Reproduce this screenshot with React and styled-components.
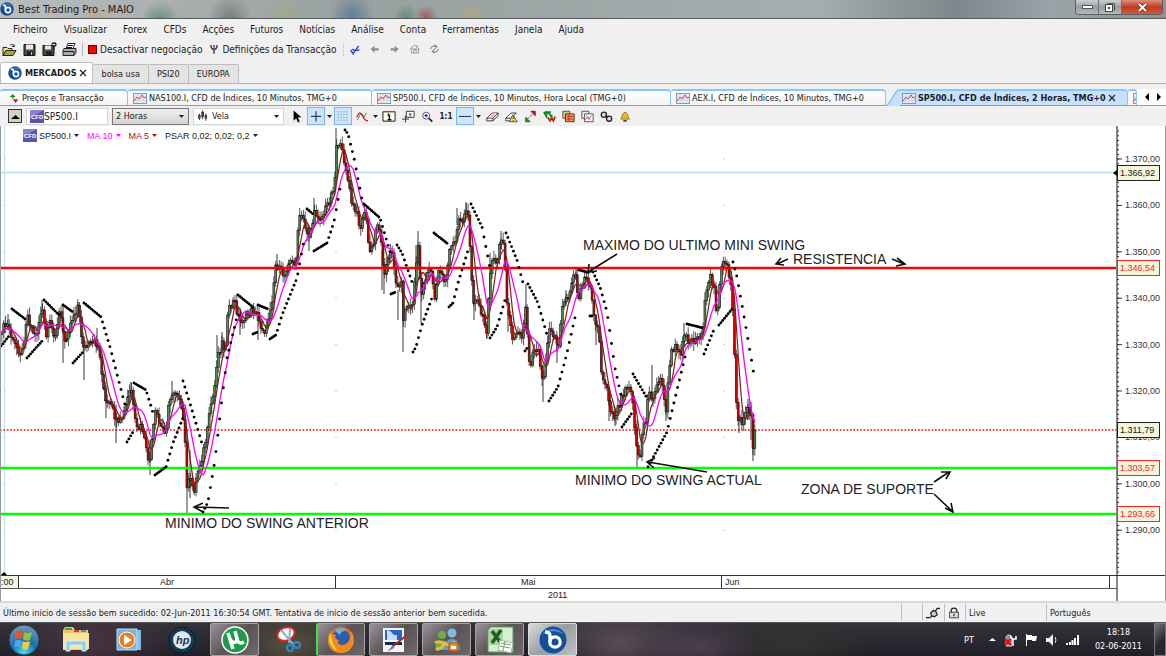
import React from 'react';
import styled, { createGlobalStyle, css } from 'styled-components';

const uiFont = '"DejaVu Sans Condensed", "Open Sans", sans-serif';
const chartFont = '"Liberation Sans", Arial, sans-serif';

const menus = ['Ficheiro', 'Visualizar', 'Forex', 'CFDs', 'Acções', 'Futuros', 'Notícias', 'Análise', 'Conta', 'Ferramentas', 'Janela', 'Ajuda'];
const workspaces = ['bolsa usa', 'PSI20', 'EUROPA'];
const charts = [
  { label: 'NAS100.I, CFD de Índices, 10 Minutos, TMG+0', width: 244 },
  { label: 'SP500.I, CFD de Índices, 10 Minutos, Hora Local (TMG+0)', width: 299 },
  { label: 'AEX.I, CFD de Índices, 10 Minutos, TMG+0', width: 215 },
];

// closing line of the session, x then y in chart units
const closes = [
  [0, 338], [2, 328], [8, 325], [13, 343], [22, 353], [27, 313], [32, 330], [36, 336], [42, 306], [46, 340], [49, 322], [54, 338],
  [60, 310], [64, 343], [68, 330], [74, 313], [78, 305], [81, 333], [84, 348], [90, 345], [95, 343], [98, 345], [102, 373], [105, 403],
  [110, 405], [115, 417], [118, 427], [124, 413], [128, 397], [131, 387], [134, 415], [136, 430], [142, 427], [147, 457], [150, 460],
  [153, 430], [156, 410], [160, 427], [166, 430], [169, 403], [173, 390], [178, 392], [180, 407], [184, 423], [187, 487], [190, 480],
  [194, 490], [198, 470], [203, 453], [207, 433], [211, 403], [214, 393], [217, 357], [222, 343], [225, 350], [228, 313], [234, 300],
  [240, 322], [245, 317], [255, 308], [260, 325], [266, 332], [269, 312], [272, 298], [276, 262], [280, 272], [285, 275], [289, 258],
  [295, 268], [298, 228], [301, 213], [305, 228], [309, 235], [315, 213], [322, 218], [327, 205], [332, 192], [335, 177], [337, 138],
  [340, 147], [345, 162], [348, 182], [352, 205], [357, 215], [361, 228], [365, 207], [369, 252], [373, 248], [378, 218], [382, 252],
  [384, 272], [388, 262], [392, 248], [397, 292], [401, 275], [403, 318], [407, 305], [412, 308], [416, 265], [418, 248], [421, 295],
  [425, 278], [430, 265], [435, 300], [439, 267], [445, 283], [450, 250], [455, 240], [458, 218], [463, 220], [467, 207], [470, 243],
  [473, 300], [478, 303], [483, 320], [487, 330], [489, 280], [493, 260], [497, 263], [500, 242], [504, 243], [506, 297], [509, 317],
  [513, 340], [518, 333], [522, 340], [526, 303], [528, 347], [530, 373], [533, 353], [538, 347], [543, 383], [546, 360], [548, 333],
  [553, 333], [558, 350], [563, 300], [568, 300], [572, 277], [576, 273], [578, 307], [582, 280], [590, 282], [595, 320], [599, 333],
  [601, 373], [607, 387], [610, 407], [614, 417], [618, 407], [625, 387], [630, 383], [633, 407], [637, 453], [640, 457], [643, 427],
  [646, 420], [648, 390], [653, 400], [660, 373], [666, 413], [668, 377], [672, 350], [676, 347], [680, 357], [684, 330], [688, 340],
  [695, 340], [702, 333], [705, 303], [710, 277], [714, 287], [717, 317], [720, 277], [722, 263], [727, 267], [729, 280], [732, 293],
  [734, 343], [737, 417], [742, 423], [747, 407], [751, 417], [753, 447], [755, 425],
];

// wicks that stand out: x, top, bottom
const spikes = [
  [8, 314, 330], [42, 300, 312], [63, 306, 363], [78, 302, 312], [84, 340, 380], [97, 328, 350], [106, 385, 418], [116, 405, 443], [131, 382, 400],
  [150, 440, 475], [172, 381, 400], [187, 430, 513], [190, 450, 498], [217, 335, 358], [222, 332, 350], [240, 310, 335], [258, 312, 340],
  [277, 254, 270], [309, 225, 251], [314, 198, 215], [336, 128, 178], [382, 250, 290], [384, 262, 294], [398, 290, 320], [403, 280, 352],
  [418, 231, 270], [421, 280, 323], [416, 245, 290], [457, 208, 225], [466, 202, 215], [474, 300, 320], [487, 325, 339], [490, 253, 290],
  [501, 231, 250], [508, 310, 332], [526, 284, 320], [543, 365, 402], [557, 345, 363], [566, 290, 306], [576, 269, 280], [596, 320, 345],
  [609, 390, 421], [615, 410, 426], [637, 420, 467], [652, 365, 400], [666, 400, 421], [684, 323, 340], [723, 261, 275], [739, 415, 433],
  [748, 399, 420], [751, 402, 440], [753, 430, 461],
];

const psar = [
  [[1, 346], [9, 336]],
  [[12, 309], [25, 319]],
  [[27, 358], [43, 340]],
  [[44, 300], [59, 315]],
  [[63, 305], [73, 312]],
  [[73, 363], [83, 352]],
  [[84, 303], [101, 317], [110, 347], [125, 405]],
  [[127, 442], [133, 432]],
  [[134, 383], [146, 390], [153, 413]],
  [[155, 475], [166, 467], [173, 443], [183, 418]],
  [[183, 381], [195, 420], [203, 447]],
  [[203, 512], [208, 502], [215, 460], [221, 407], [227, 358], [237, 317]],
  [[238, 295], [254, 308]],
  [[253, 334], [258, 332]],
  [[258, 305], [268, 309]],
  [[270, 339], [276, 335], [282, 315], [297, 278], [305, 235]],
  [[307, 209], [313, 214]],
  [[314, 251], [327, 243], [334, 222], [341, 183]],
  [[345, 130], [348, 134], [354, 158], [363, 205]],
  [[364, 204], [380, 218], [390, 252]],
  [[391, 294], [396, 292]],
  [[397, 245], [402, 253], [412, 282]],
  [[413, 352], [416, 347], [422, 325], [433, 295]],
  [[434, 233], [448, 244]],
  [[449, 307], [453, 303], [458, 283], [469, 247]],
  [[471, 204], [482, 227], [490, 268]],
  [[490, 338], [497, 327], [505, 300]],
  [[506, 233], [517, 260], [524, 287]],
  [[525, 351], [528, 347]],
  [[528, 284], [538, 303], [547, 335]],
  [[549, 401], [558, 387], [567, 353], [576, 313]],
  [[579, 270], [590, 273]],
  [[590, 316], [593, 316]],
  [[593, 272], [600, 287], [607, 312], [615, 368], [622, 400]],
  [[622, 427], [632, 413]],
  [[633, 374], [647, 398]],
  [[648, 467], [667, 432], [677, 390], [686, 353]],
  [[687, 324], [703, 328]],
  [[704, 354], [715, 327]],
  [[719, 325], [733, 308]],
  [[733, 262], [737, 277], [745, 322], [754, 375]],
];

const STEP = 1.85;

function sample(points, step) {
  const out = [];
  let i = 0;
  for (let x = points[0][0]; x <= points[points.length - 1][0]; x += step) {
    while (i < points.length - 2 && points[i + 1][0] < x) i += 1;
    const [x0, y0] = points[i];
    const [x1, y1] = points[i + 1];
    out.push([x, y0 + ((y1 - y0) * (x - x0)) / (x1 - x0)]);
  }
  return out;
}

const noise = (n) => {
  const v = Math.sin(n * 12.9898) * 43758.5453;
  return v - Math.floor(v);
};

const bars = sample(closes, STEP).map(([x, y], i) => [x, y + (noise(i) - 0.5) * 9]);

const candles = bars.slice(1).map(([x, y], i) => {
  const open = bars[i][1];
  const top = Math.min(open, y);
  const height = Math.max(Math.abs(open - y), 2);
  return {
    x,
    top,
    height,
    up: y < open,
    high: top - 1 - noise(i + 300) * 7,
    low: top + height + 1 + noise(i + 700) * 7,
  };
});

function average(size) {
  return bars
    .map(([x], i) => {
      const part = bars.slice(Math.max(0, i - size + 1), i + 1);
      return `${x.toFixed(1)},${(part.reduce((sum, p) => sum + p[1], 0) / part.length).toFixed(1)}`;
    })
    .join(' ');
}

const prices = ['1.370,00', '1.360,00', '1.350,00', '1.340,00', '1.330,00', '1.320,00', '1.310,00', '1.300,00', '1.290,00'];
const priceY = (i) => 159 + i * 46.4;
const ticks = Array.from({ length: 96 }, (_, i) => 131.2 + i * 4.64);

const tags = [
  { y: 173, text: '1.366,92', color: '#222' },
  { y: 268, text: '1.346,54', color: '#f22' },
  { y: 430, text: '1.311,79', color: '#222' },
  { y: 468, text: '1.303,57', color: '#f22' },
  { y: 514, text: '1.293,66', color: '#f22' },
];

const notes = [
  [583, 250, 'MAXIMO DO ULTIMO MINI SWING'],
  [793, 264, 'RESISTENCIA'],
  [575, 485, 'MINIMO DO SWING ACTUAL'],
  [801, 494, 'ZONA DE SUPORTE'],
  [165, 528, 'MINIMO DO SWING ANTERIOR'],
];

const arrows = [
  'M617 254 588 272M589 264 588 272 597 271',
  'M788 259 777 264M781 258 776 264 784 265',
  'M892 259 904 264M897 258 905 264 896 266',
  'M707 472 648 462M655 458 647 462 654 468',
  'M229 508 195 507M203 503 194 507 203 512',
  'M934 482 949 472M941 472 950 472 946 479',
  'M934 494 952 511M945 508 953 512 951 503',
];

function PriceChart() {
  return (
    <ChartSvg viewBox="0 126 1166 475" role="img" aria-label="SP500.I">
      <rect x="0" y="126" width="1166" height="475" fill="#fff" />
      <path d="M4.500 126V575" stroke="#c9e6f5" strokeWidth="1.500" />
      <path d="M0 172.500H1116" stroke="#b4dfe9" strokeWidth="1.300" />
      {prices.map((p, i) => (
        <path key={p} d={`M4 ${priceY(i)}h2M335 ${priceY(i)}h2M723 ${priceY(i)}h2`} stroke="#ccc" />
      ))}
      <path d="M0 430H1116" stroke="#e11" strokeWidth="1.500" strokeDasharray="1.700 1.700" />
      {spikes.map(([x, y1, y2]) => (
        <path key={x} d={`M${x} ${y1}V${y2}`} stroke="#222" strokeWidth="0.900" />
      ))}
      {candles.map((c) => (
        <g key={c.x} stroke="#111">
          <path d={`M${c.x} ${c.high}V${c.low}`} strokeWidth="0.700" />
          <rect x={c.x - 0.9} y={c.top} width="1.900" height={c.height} strokeWidth="0.600" fill={c.up ? '#4f8f55' : '#d40000'} />
        </g>
      ))}
      <path d="M0 268H1116" stroke="#f00" strokeWidth="2.600" />
      <path d="M0 468H1116M0 514H1116" stroke="#0f0" strokeWidth="2.600" />
      <polyline points={average(5)} fill="none" stroke="#8b1a1a" strokeWidth="1.200" />
      <polyline points={average(10)} fill="none" stroke="#f0f" strokeWidth="1.300" />
      {psar.map((track, t) =>
        sample(track, STEP).map(([x, y]) => <circle key={`${t}-${x}`} cx={x} cy={y} r="1.450" fill="#000" />)
      )}
      {arrows.map((d) => (
        <path key={d} d={d} fill="none" stroke="#111" strokeWidth="1.600" />
      ))}
      {notes.map(([x, y, text]) => (
        <text key={text} x={x} y={y} fontSize="14" fill="#222">{text}</text>
      ))}

      <path d="M1117 126V601" stroke="#555" strokeWidth="1.400" />
      {ticks.map((y) => (
        <path key={y} d={`M1117 ${y}h2`} stroke="#333" />
      ))}
      {prices.map((p, i) => (
        <g key={p}>
          <path d={`M1117 ${priceY(i)}h5`} stroke="#333" />
          <text x="1125" y={priceY(i) + 3} fontSize="9" fill="#333">{p}</text>
        </g>
      ))}
      {tags.map((t) => (
        <g key={t.text}>
          <rect x="1117.500" y={t.y - 7.5} width="42" height="15" fill="#f5f5dc" stroke={t.color} />
          <text x="1120" y={t.y + 3} fontSize="9" fill={t.color}>{t.text}</text>
        </g>
      ))}
      <path d="M1113 173l4-3v6z" fill="#000" />

      <path d="M0 575.500H1166" stroke="#333" />
      <path d="M0 588.500H1117" stroke="#555" />
      <rect x="0" y="576" width="18" height="12" fill="#f5f5dc" />
      <path d="M18.500 576V588M335.500 576V588M721.500 576V588M1109.500 576V588" stroke="#333" />
      <path d="M1 575l3-3 3 3z" fill="#000" />
      <g fontSize="9" fill="#222">
        <text x="1" y="585">:00</text>
        <text x="160" y="585">Abr</text>
        <text x="521" y="585">Mai</text>
        <text x="725" y="585">Jun</text>
        <text x="548" y="598">2011</text>
      </g>
      <path d="M.5 126V601M1165.500 126V601" stroke="#999" />
    </ChartSvg>
  );
}

/* icons */

const Caret = () => <svg width="7" height="5" viewBox="0 0 7 5"><path d="M1 1h5L3.500 4z" fill="currentColor" /></svg>;

const BrandIcon = ({ size = 14 }) => (
  <svg width={size} height={size} viewBox="0 0 28 28">
    <circle cx="14" cy="14" r="13.500" fill="#134f9c" />
    <path d="M3 9a13 13 0 0 1 22 0 18 18 0 0 0-22 0z" fill="#4d8fd6" />
    <path d="M6 6c4 0 5 1 5 4v6" fill="none" stroke="#fff" strokeWidth="3.500" />
    <circle cx="16" cy="16" r="5.200" fill="none" stroke="#fff" strokeWidth="3.200" />
  </svg>
);

const ChartIcon = () => (
  <svg width="14" height="11" viewBox="0 0 14 11">
    <rect x=".5" y=".5" width="13" height="10" fill="#e3ecf8" stroke="#8898b8" />
    <path d="M4 1v9M7 1v9M10 1v9M1 4h12M1 7h12" stroke="#c3d1e6" strokeWidth=".6" />
    <path d="M1 8l3-4 2 2 3-4 2 3 2-1" fill="none" stroke="#d44" />
  </svg>
);

const CfdIcon = () => (
  <svg width="14" height="13" viewBox="0 0 14 13">
    <rect width="14" height="13" fill="#5b53b4" />
    <path d="M0 0h14L0 8z" fill="#8a84d0" />
    <text x="1" y="9" fontSize="6" fontWeight="bold" fontFamily="Liberation Sans" fill="#fff">CFD</text>
  </svg>
);

const glyphs = {
  open: <><path d="M1 5h4l1 1h4v2H4l-3 5z" fill="#efe68a" stroke="#222" /><path d="M1 13l3-5h10l-3 5z" fill="#a9a53a" stroke="#222" /><path d="M8 3c2-2 4-1 4 1m-2 0h2V2" fill="none" stroke="#222" /></>,
  save: <><path d="M2 2h11v11H2z" fill="#4c5038" stroke="#111" /><path d="M4 2h7v5H4z" fill="#e8e8e8" /><path d="M5 9h6v4H5z" fill="#222" /><path d="M9 10h1v2H9z" fill="#fff" /></>,
  saveAs: <><path d="M1 3h11v10H1z" fill="#4c5038" stroke="#111" /><path d="M3 3h6v4H3z" fill="#e8e8e8" /><path d="M4 9h6v4H4z" fill="#222" /><path d="M10 2c0-2 4-2 4 0s-2 1-2 3m0 1v1" fill="none" stroke="#111" strokeWidth="1.300" /></>,
  print: <><path d="M4 6l2-5h7l-2 5" fill="#fff" stroke="#222" /><path d="M2 6h12v4l-2 3H1V8z" fill="#aaa" stroke="#222" /><path d="M1 9h11M6 3h5M5 5h5M12 9v4" stroke="#222" /></>,
  settings: <path d="M3 1v3l2 3h5l2-3V1M7.500 1v4M7.500 7v7" fill="none" stroke="#43254d" strokeWidth="2" />,
  check: <path d="M2 8l3 5 7-10M4 7l3 2M9 9l4-1" fill="none" stroke="#2338d8" strokeWidth="1.700" />,
  back: <path d="M2 7l5-4v3h5v3H7v3z" fill="#8d8d8d" />,
  next: <path d="M12 7L7 3v3H2v3h5v3z" fill="#8d8d8d" />,
  home: <path d="M1 7l6-5 6 5M3 6v6h9V6M6 12V8h3v4M4 7h7M10 2v3" fill="none" stroke="#888" />,
  refresh: <path d="M2 7c1-4 5-4 7-3M7 2l3 2-3 3M12 7c-1 4-5 4-7 3M7 12l-3-2 3-3" fill="none" stroke="#888" strokeWidth="1.300" />,
  pointer: <path d="M3 0v12l3-3 2 5 2-1-2-5h4z" fill="#000" />,
  cross: <path d="M7.500 2v11M2 7.500h11" stroke="#24425f" strokeWidth="1.300" />,
  grid: <path d="M2 2.500h11M2 5.500h11M2 8.500h11M2 11.500h11" stroke="#4d74a4" strokeDasharray="1 2" />,
  study: <><path d="M1 8c2-7 5-6 7-1s4 5 6 5" fill="none" stroke="#c22" strokeWidth="1.500" /><path d="M2 11c3-9 5-9 7-3l3-5" fill="none" stroke="#654" /></>,
  info: <><path d="M1 2.500h13v10H1z" fill="#fffce8" stroke="#111" /><path d="M6 6.500h2v4M6 11h4M7 4v1.500" stroke="#111" strokeWidth="1.500" fill="none" /></>,
  callout: <><path d="M5 1h9v7H5z" fill="#fff" stroke="#222" /><path d="M0 10h8M4 6v8M8 4h3M9.500 4v3" stroke="#222" /></>,
  zoom: <><circle cx="6" cy="6" r="4" fill="#fff" stroke="#444" /><path d="M4 6h4M6 4v4" stroke="#22f" strokeWidth="1.500" /><path d="M9 9l4 4" stroke="#222" strokeWidth="2" /></>,
  line: <path d="M1 7.500h13" stroke="#223" />,
  eraser: <><path d="M1 9l6-6h7L8 9zM1 9v3h7l6-6V3M8 9v3" fill="#fff" stroke="#222" /><path d="M3 9l5-6h4L7 9z" fill="#f4b8c4" /></>,
  warn: <><path d="M1 9l6-6h6l-6 6zM1 9v3h5" fill="#fff" stroke="#222" /><path d="M9 5l5 8H5z" fill="#ffe95a" stroke="#443" /><path d="M9.500 7v3M9.500 11v1" stroke="#111" /></>,
  trend: <><path d="M4 10l7-7" stroke="#222" strokeDasharray="1.500 1" /><path d="M8 1h5v5z" fill="#d22" stroke="#711" /><path d="M2 8v5h5z" fill="#2a2" stroke="#151" /></>,
  exchange: <><path d="M1 2l3 5V3h3l3 5V5M2 2h7" fill="none" stroke="#148a28" strokeWidth="2" /><path d="M6 8l2 4 2-3 2 3 2-5" fill="none" stroke="#b21" strokeWidth="2" /></>,
  stack: <><path d="M1 1h8v8H1z" fill="#d8c5a0" stroke="#444" /><path d="M4 4h10v9H4z" fill="#f0a040" stroke="#422" /><path d="M5 7h8M5 10h8M8 5v7" stroke="#b03020" /></>,
  stack2: <><path d="M1 1h8v8H1z" fill="#eee" stroke="#444" /><path d="M4 4h10v9H4z" fill="#fff" stroke="#444" /><path d="M5 11l2-3 2 2 3-4M6 6l5 5" fill="none" stroke="#c33" /></>,
  link: <><circle cx="4.500" cy="5" r="3" fill="#ddd" stroke="#222" strokeWidth="1.500" /><circle cx="10.500" cy="9.500" r="3" fill="#ddd" stroke="#222" strokeWidth="1.500" /><path d="M6 6l3 2" stroke="#222" strokeWidth="1.500" /></>,
  bell: <><path d="M2 10c2-1 1-7 5-8 4 1 3 7 5 8z" fill="#f3b325" stroke="#8f6510" /><path d="M5 12h4" stroke="#444" strokeWidth="2" /></>,
  plug: <path d="M0 12h4l3-2M10 5l2-3h3M5 7l3-3 3 2 1 3-3 2-3-1z" fill="#ccc" stroke="#222" strokeWidth="1.300" />,
  lock: <><path d="M4 7V4c0-4 7-4 7 0v3" fill="none" stroke="#222" strokeWidth="1.500" /><path d="M2 6h11v7H2z" fill="#ddd" stroke="#222" /><path d="M7.500 8v3" stroke="#222" strokeWidth="1.500" /></>,
  candles: <><path d="M3 4v8M7 0v11M11 4v9" stroke="#222" /><path d="M2 6h2v4H2zM10 6h2v4h-2z" fill="#5a9a5a" stroke="#222" /><path d="M6 2h2v6H6z" fill="#a22" stroke="#222" /></>,
  updown: <><path d="M5 1l4 4H1z" fill="#188a28" /><path d="M4 4h2v3H4z" fill="#188a28" /><path d="M9 13l4-5H5z" fill="#c22" /></>,
};

const Icon = ({ name, size = 13 }) => (
  <svg width={size} height={size} viewBox="0 0 15 14">{glyphs[name]}</svg>
);

const apps = [
  {
    name: 'Explorador',
    art: <><path d="M2 5l2-3h8l2 3h13v20H2z" fill="#e9c869" /><path d="M4 3h7v2H4z" fill="#3a3" /><path d="M13 5h5v2h-5z" fill="#d33" /><path d="M20 5h5v2h-5z" fill="#39c" /><path d="M2 8h26v16H2z" fill="#f8e5a0" /><path d="M5 26V16h20v10h-4v-6H9v6z" fill="#8fcdea" stroke="#d5effa" /></>,
  },
  {
    name: 'Media Player',
    art: <><path d="M6 5h21v20H10z" fill="#8bbbdc" /><path d="M3 4h20v21H3z" fill="#79b5dc" stroke="#bfe0f2" /><circle cx="13" cy="15" r="8" fill="#ef7b1a" stroke="#fff" /><path d="M10 10l8 5-8 5z" fill="#fff" /></>,
  },
  {
    name: 'HP',
    art: <><circle cx="15" cy="15" r="13" fill="#18384f" stroke="#0a2030" /><circle cx="15" cy="15" r="9" fill="#dfe8ee" /><text x="9" y="19" fontSize="11" fontStyle="italic" fontWeight="bold" fill="#18384f" fontFamily="Liberation Sans">hp</text></>,
  },
  {
    name: 'uTorrent',
    open: true,
    art: <><circle cx="15" cy="15" r="13" fill="#1f9a48" stroke="#fff" strokeWidth="1.500" /><path d="M8 8l5 16M10 14c2 5 7 4 7 0L15 6M17 14c1 4 3 5 7 3" fill="none" stroke="#fff" strokeWidth="3.500" /></>,
  },
  {
    name: 'Recorte',
    art: <><ellipse cx="13" cy="9" rx="9" ry="6.500" fill="#fff" stroke="#d22" strokeWidth="2" transform="rotate(-20 13 9)" /><path d="M8 5l12 14M17 4l-1 14" stroke="#9ab" strokeWidth="2" /><circle cx="17" cy="23" r="3" fill="none" stroke="#2b8ad0" strokeWidth="2" /><circle cx="24" cy="20" r="3" fill="none" stroke="#2b8ad0" strokeWidth="2" /></>,
  },
  {
    name: 'Firefox',
    open: true,
    lit: true,
    art: <><circle cx="15" cy="15" r="13" fill="#e4731b" /><circle cx="15" cy="13" r="9" fill="#2b5ea8" /><path d="M9 6c4-4 9-3 12 0-4-1-6 1-7 4z" fill="#69b0e4" /><path d="M4 7c1 3 4 2 6 3-2 2 0 5 3 5-2 2-1 5 3 5 5 0 8-4 8-9l1-5c6 9 2 22-10 22S-1 17 4 7z" fill="#f08a1c" /><path d="M4 8c-2 8 1 15 8 18-4-4-6-10-8-18z" fill="#ffd64a" /></>,
  },
  {
    name: 'Editor',
    open: true,
    art: <><path d="M4 3h21v24H4z" fill="#f4f6fa" /><path d="M6 5h17v10H6z" fill="#2e62c4" /><path d="M8 5c6 1 5 6 10 5v5H8z" fill="#c6dbf7" /><path d="M6 17h17v3H6z" fill="#14295c" /><path d="M28 10L13 22" stroke="#b4242c" strokeWidth="2" /><path d="M14 20l-6 7 7-4z" fill="#778" /></>,
  },
  {
    name: 'Messenger',
    open: true,
    art: <><circle cx="10" cy="10" r="4" fill="#6cb04c" /><path d="M3 25c0-13 14-13 14 0z" fill="#6cb04c" /><circle cx="20" cy="8" r="4.500" fill="#7db9e3" /><path d="M12 25c0-15 16-15 16 0z" fill="#5b9dd0" /><path d="M3 18c6-5 9 6 20-1M4 24c6 1 7-4 10-7" fill="none" stroke="#edb738" strokeWidth="3" /><path d="M17 18h9v8h-9z" fill="#f08a2c" stroke="#b8480c" /><path d="M19 21h5v3h-5z" fill="#fff" /></>,
  },
  {
    name: 'Excel',
    open: true,
    art: <><path d="M6 2h22v25H3V5z" fill="#d9efd4" stroke="#5a9a50" /><path d="M6 4h12v16H4V6z" fill="#a8d59a" /><path d="M7 6l9 12M16 5L7 18" stroke="#1d5c26" strokeWidth="3.500" /><path d="M15 15l13 3-2 10-13-3z" fill="#fff" stroke="#9b9" /><path d="M16 18l10 2M15 21l10 2M20 16l-2 10" stroke="#7b9c78" /></>,
  },
];

const chartTools = ['eraser', 'warn', 'trend', 'exchange', 'stack', 'stack2', 'link', 'bell'];

export default function App() {
  return (
    <Window>
      <GlobalStyle />
      <TitleBar>
        <BrandIcon size={14} />
        <Title>Best Trading Pro - MAIO</Title>
        <WindowButtons>
          <WindowButton aria-label="Minimizar"><svg width="11" height="4"><rect x=".5" y=".5" width="10" height="3" fill="#fff" stroke="#555" /></svg></WindowButton>
          <WindowButton aria-label="Restaurar"><svg width="12" height="11" fill="none"><path d="M3.500 1.500h7v7" stroke="#555" /><rect x="1.500" y="2.500" width="7" height="7" stroke="#444" fill="#fff" /><rect x="4" y="5" width="2" height="2" fill="#444" /></svg></WindowButton>
          <WindowButton $close aria-label="Fechar"><svg width="11" height="9"><path d="M2 1l7 7M9 1L2 8" stroke="#533" strokeWidth="3.500" /><path d="M2 1l7 7M9 1L2 8" stroke="#fff" strokeWidth="2" /></svg></WindowButton>
        </WindowButtons>
      </TitleBar>

      <MenuBar>
        {menus.map((m) => <MenuItem key={m}>{m}</MenuItem>)}
      </MenuBar>

      <MainToolbar>
        <ToolButton aria-label="Abrir"><Icon name="open" size={15} /></ToolButton>
        <ToolButton aria-label="Gravar"><Icon name="save" size={15} /></ToolButton>
        <ToolButton aria-label="Gravar como"><Icon name="saveAs" size={15} /></ToolButton>
        <ToolButton aria-label="Imprimir"><Icon name="print" size={15} /></ToolButton>
        <Divider />
        <TextButton><RedSquare />Desactivar negociação</TextButton>
        <TextButton><Icon name="settings" size={10} />Definições da Transacção</TextButton>
        <Divider $dotted />
        <SmallTools>
          {['check', 'back', 'next', 'home', 'refresh'].map((n) => (
            <ToolButton key={n} aria-label={n}><Icon name={n} size={12} /></ToolButton>
          ))}
        </SmallTools>
      </MainToolbar>

      <WorkspaceTabs>
        <WorkspaceTab $active><BrandIcon size={14} />MERCADOS <CloseX /></WorkspaceTab>
        {workspaces.map((w) => <WorkspaceTab key={w}>{w}</WorkspaceTab>)}
      </WorkspaceTabs>

      <DocTabs>
        <DocTab $first $width={128}><Icon name="updown" size={11} />Preços e Transacção</DocTab>
        {charts.map((c) => (
          <DocTab key={c.label} $width={c.width}><ChartIcon />{c.label}</DocTab>
        ))}
        <svg width="14" height="17" viewBox="0 0 14 17">
          <path d="M0 17C5 14 8 4 12 1h2v16z" fill="#c5e1ff" />
          <path d="M0 17C5 14 8 4 12 1h2" fill="none" stroke="#83c1fb" strokeWidth="1.500" />
        </svg>
        <DocTab $active $width={228}><ChartIcon />SP500.I, CFD de Índices, 2 Horas, TMG+0 <CloseX /></DocTab>
        <DocTab $width={9} aria-label="Seguinte"><ChartIcon /></DocTab>
        <Scroller>
          <ToolButton aria-label="Anterior"><svg width="6" height="8"><path d="M5 0v8L1 4z" /></svg></ToolButton>
          <ToolButton aria-label="Próximo"><svg width="6" height="8"><path d="M1 0v8l4-4z" /></svg></ToolButton>
        </Scroller>
      </DocTabs>

      <ChartToolbar>
        <CollapseButton aria-label="Recolher"><svg width="9" height="5"><path d="M0 5l4.500-4L9 5z" /></svg></CollapseButton>
        <Field $width={82}><CfdIcon /><SymbolInput aria-label="Símbolo" defaultValue="SP500.I" /></Field>
        <Field $width={77} $grey>
          <Select aria-label="Período" defaultValue="2 Horas"><option>2 Horas</option></Select>
          <Caret />
        </Field>
        <Field $width={91}>
          <Icon name="candles" size={12} />
          <Select aria-label="Tipo" defaultValue="Vela"><option>Vela</option></Select>
          <Caret />
        </Field>
        <Tools>
          <ChartTool aria-label="Ponteiro"><Icon name="pointer" /></ChartTool>
          <ChartTool $on aria-label="Cruz"><Icon name="cross" size={14} /></ChartTool>
          <ToolCaret aria-label="Opções da cruz"><Caret /></ToolCaret>
          <ChartTool $on aria-label="Grelha"><Icon name="grid" size={14} /></ChartTool>
          <ChartTool aria-label="Estudos"><Icon name="study" /></ChartTool>
          <ToolCaret aria-label="Opções de estudos"><Caret /></ToolCaret>
          <ChartTool aria-label="Informação"><Icon name="info" size={14} /></ChartTool>
          <ChartTool aria-label="Legenda"><Icon name="callout" /></ChartTool>
          <ChartTool aria-label="Zoom"><Icon name="zoom" /></ChartTool>
          <ChartTool>1:1</ChartTool>
          <ChartTool $on aria-label="Linha"><Icon name="line" size={14} /></ChartTool>
          <ToolCaret aria-label="Opções de linha"><Caret /></ToolCaret>
          {chartTools.map((n) => <ChartTool key={n} aria-label={n}><Icon name={n} /></ChartTool>)}
        </Tools>
      </ChartToolbar>

      <ChartPanel>
        <PriceChart />
        <Legend>
          <LegendItem $color="#222"><CfdIcon />SP500.I <Caret /></LegendItem>
          <LegendItem $color="#f0f">MA 10 <Caret /></LegendItem>
          <LegendItem $color="#a01818">MA 5 <Caret /></LegendItem>
          <LegendItem $color="#222">PSAR 0,02; 0,02; 0,2 <Caret /></LegendItem>
        </Legend>
      </ChartPanel>

      <StatusBar>
        <StatusText>Último início de sessão bem sucedido: 02-Jun-2011 16:30:54 GMT. Tentativa de início de sessão anterior bem sucedida.</StatusText>
        <StatusCell $width={21} />
        <StatusCell $width={22}><Icon name="plug" size={14} /></StatusCell>
        <StatusCell $width={21}><Icon name="lock" size={12} /></StatusCell>
        <StatusCell $width={81}>Live</StatusCell>
        <StatusCell $width={120}>Português</StatusCell>
      </StatusBar>

      <Taskbar>
        <StartButton aria-label="Iniciar">
          <svg width="34" height="32" viewBox="0 0 34 32">
            <defs>
              <radialGradient id="orb" cx="50%" cy="90%" r="90%">
                <stop offset="0" stopColor="#3fe0ff" />
                <stop offset=".45" stopColor="#1c6fae" />
                <stop offset="1" stopColor="#7d9ab0" />
              </radialGradient>
            </defs>
            <circle cx="17" cy="16" r="15" fill="url(#orb)" stroke="#1a3b55" />
            <path d="M9 8c3-2 5-1 7 0l-1 7c-2-1-5-1-7 1z" fill="#e8562a" />
            <path d="M17 8c3 2 5 1 8 0l-2 8c-3 1-5 1-7-1z" fill="#8cc63e" />
            <path d="M8 17c3-2 5-1 7 0l-1 7c-2-2-5-2-7 0z" fill="#49a8e8" />
            <path d="M16 17c2 2 4 1 7 0l-2 8c-2 1-4 1-6-1z" fill="#fcc938" />
          </svg>
        </StartButton>
        {apps.map((a) => (
          <TaskButton key={a.name} $open={a.open} $lit={a.lit} aria-label={a.name}>
            <svg width="30" height="30" viewBox="0 0 30 30">{a.art}</svg>
          </TaskButton>
        ))}
        <TaskButton $open $current aria-label="Best Trading Pro"><BrandIcon size={28} /></TaskButton>
        <Tray>
          <TrayText>PT</TrayText>
          <svg width="7" height="5"><path d="M0 4l3.500-3L7 4z" fill="#fff" /></svg>
          <svg width="13" height="14"><path d="M2 5c0-4 6-4 6 0v8H2z" fill="#888" stroke="#ddd" /><path d="M7 3v3h5V3M9 6v7" stroke="#fff" strokeWidth="1.500" fill="none" /><path d="M1 6l6 6M7 6l-6 6" stroke="#f00" strokeWidth="2" /></svg>
          <svg width="13" height="12"><path d="M1.500 0v12" stroke="#fff" /><path d="M2 1h5v1h5l-1 5H7V6H2z" fill="#fff" /></svg>
          <svg width="12" height="12"><path d="M0 4h3l4-4v12L3 8H0z" fill="#eee" /><path d="M9 3q2 3 0 6" stroke="#ddd" fill="none" /></svg>
          <svg width="13" height="10"><path d="M0 8h2v2H0zM3 7h2v3H3zM5.500 5h2v5h-2zM8 3h2v7H8zM11 0h2v10h-2z" fill="#fff" /></svg>
          <Clock><span>18:18</span><span>02-06-2011</span></Clock>
          <DesktopButton aria-label="Mostrar ambiente de trabalho" />
        </Tray>
      </Taskbar>
    </Window>
  );
}

const CloseX = () => <svg width="8" height="8"><path d="M1 1l6 6M7 1L1 7" stroke="#222" strokeWidth="1.200" /></svg>;

const GlobalStyle = createGlobalStyle`
  * { box-sizing: border-box; }

  body {
    margin: 0;
    background: #f0f0f0;
    font-family: ${uiFont};
    font-size: 9px;
    color: #1b1b1b;
  }

  button, input, select {
    margin: 0;
    padding: 0;
    border: 0;
    background: none;
    font: inherit;
    color: inherit;
    white-space: nowrap;
  }

  svg { flex: none; }
`;

const Window = styled.div`
  display: flex;
  flex-direction: column;
  min-height: 100vh;
`;

const TitleBar = styled.header`
  display: flex;
  align-items: center;
  gap: 4px;
  height: 19px;
  border-bottom: 1px solid #555d5f;
  background:
    radial-gradient(circle at 160px 22px, #3e7a5cb0, transparent 20px),
    radial-gradient(circle at 95px 22px, #c99a66a0, transparent 18px),
    radial-gradient(circle at 230px 18px, #5c6464a0, transparent 22px),
    radial-gradient(circle at 285px 18px, #a9a67ab0, transparent 20px),
    radial-gradient(circle at 352px 16px, #4a7096b0, transparent 22px),
    radial-gradient(circle at 406px 16px, #4f8a70c0, transparent 12px),
    radial-gradient(circle at 426px 17px, #a04a50c0, transparent 12px),
    radial-gradient(circle at 472px 18px, #b5a878b0, transparent 16px),
    linear-gradient(90deg, #b9bdbd, #98a0a0 30%, #a5aeae 70%, #7d868a 82%, #9aa4a8 90%, #8b9396);
`;

const Title = styled.span`
  flex: 1;
  font-size: 11px;
`;

const WindowButtons = styled.div`
  display: flex;
  align-self: flex-start;
  margin-right: 3px;
  border: 1px solid #5c6264;
  border-top: 0;
  border-radius: 0 0 4px 4px;
  overflow: hidden;
`;

const WindowButton = styled.button`
  display: flex;
  align-items: center;
  justify-content: center;
  width: ${(p) => (p.$close ? 40 : 23)}px;
  height: 14px;
  border-right: ${(p) => (p.$close ? 0 : '1px solid #6b7173')};
  background: ${(p) => (p.$close ? 'linear-gradient(#dc9080, #c03a22 50%, #d4593a)' : 'linear-gradient(#ccd0d0, #969d9f 50%, #b4baba)')};
`;

const MenuBar = styled.nav`
  display: flex;
  align-items: center;
  gap: 16px;
  height: 20px;
  padding: 0 13px;
`;

const MenuItem = styled.button`
  font-size: 10px;
`;

const MainToolbar = styled.div`
  display: flex;
  align-items: center;
  gap: 5px;
  height: 20px;
  padding: 0 2px;
`;

const ToolButton = styled.button`
  display: flex;
  align-items: center;
`;

const Divider = styled.span`
  width: 1px;
  height: 13px;
  border-left: 1px ${(p) => (p.$dotted ? 'dotted' : 'solid')} #b5b5b5;
`;

const TextButton = styled.button`
  display: flex;
  align-items: center;
  gap: 3px;
  padding-right: 2px;
  font-size: 10px;
`;

const RedSquare = styled.span`
  width: 9px;
  height: 9px;
  border: 1px solid #700;
  background: #f00;
`;

const SmallTools = styled.div`
  display: flex;
  gap: 8px;
`;

const WorkspaceTabs = styled.div`
  display: flex;
  align-items: flex-end;
  height: 25px;
  border-bottom: 1px solid #b4b4b4;
`;

const WorkspaceTab = styled.button`
  display: flex;
  align-items: center;
  gap: 3px;
  height: 19px;
  padding: 0 8px;
  border: 1px solid #bdbdbd;
  border-width: 1px 1px 0 0;
  border-radius: 2px 2px 0 0;
  background: #e4e4e4;

  ${(p) => p.$active && css`
    height: 21px;
    padding: 0 5px 0 7px;
    border-left-width: 1px;
    background: #fff;
    font-weight: bold;
  `}
`;

const DocTabs = styled.div`
  display: flex;
  align-items: stretch;
  height: 22px;
  padding-top: 5px;
  border-bottom: 1px solid #9a9a9a;
`;

const DocTab = styled.button`
  display: flex;
  align-items: center;
  gap: 2px;
  flex: 0 1 ${(p) => p.$width}px;
  min-width: 0;
  overflow: hidden;
  padding-left: ${(p) => (p.$first ? 9 : 5)}px;
  border-top: 2px solid #8cc5fb;
  border-right: 1px solid #8cc5fb;
  border-radius: 3px 4px 0 0;
  background: linear-gradient(#fff, #f3f3f3);

  ${(p) => p.$active && css`
    padding-left: 2px;
    border-radius: 0 4px 0 0;
    background: #c5e1ff;
    font-weight: bold;
  `}
`;

const Scroller = styled.div`
  display: flex;
  flex: 1;
  align-items: center;
  justify-content: flex-end;
  gap: 6px;
  padding-right: 4px;
  background: #fff;
`;

const ChartToolbar = styled.div`
  display: flex;
  align-items: center;
  gap: 4px;
  height: 20px;
  padding-left: 8px;
`;

const CollapseButton = styled.button`
  display: flex;
  align-items: center;
  justify-content: center;
  width: 14px;
  height: 14px;
  border: 1px solid #333;
  background: #d6cfc4;
`;

const Field = styled.div`
  display: flex;
  align-items: center;
  width: ${(p) => p.$width}px;
  height: 17px;
  padding: 0 3px;
  border: 1px solid ${(p) => (p.$grey ? '#777' : '#d5d5d5')};
  background: ${(p) => (p.$grey ? 'linear-gradient(#f0f0f0, #d4d4d4)' : '#fff')};
`;

const SymbolInput = styled.input`
  flex: 1;
  min-width: 0;
  font-size: 10px;
`;

const Select = styled.select`
  flex: 1;
  min-width: 0;
  appearance: none;
  font-size: 9px;
  outline: 0;

  svg + & { padding-left: 3px; }
`;

const Tools = styled.div`
  display: flex;
  align-items: center;
  gap: 1px;
`;

const ChartTool = styled.button`
  display: flex;
  align-items: center;
  justify-content: center;
  width: 18px;
  height: 18px;
  border: 1px solid ${(p) => (p.$on ? '#7ab8f5' : 'transparent')};
  background: ${(p) => (p.$on ? '#cde5ff' : 'none')};
  font-weight: bold;
  font-size: 8px;
`;

const ToolCaret = styled(ToolButton)`
  width: 7px;
`;

const ChartPanel = styled.main`
  position: relative;
  flex: 1;
  background: #fff;
`;

const ChartSvg = styled.svg`
  display: block;
  width: 100%;
  font-family: ${chartFont};
`;

const Legend = styled.div`
  position: absolute;
  top: 3px;
  left: 23px;
  display: flex;
  align-items: center;
  gap: 7px;
  font-family: ${chartFont};
`;

const LegendItem = styled.button`
  display: flex;
  align-items: center;
  gap: 2px;
  color: ${(p) => p.$color};
`;

const StatusBar = styled.footer`
  display: flex;
  align-items: center;
  height: 21px;
  border-top: 2px solid #d9d9d9;
`;

const StatusText = styled.span`
  flex: 1;
  padding-left: 3px;
`;

const StatusCell = styled.span`
  display: flex;
  align-items: center;
  width: ${(p) => p.$width}px;
  height: 17px;
  padding-left: 3px;
  border-left: 1px solid #c0c0c0;
`;

const Taskbar = styled.div`
  display: flex;
  align-items: stretch;
  gap: 4px;
  height: 34px;
  border-top: 1px solid #555;
  background:
    radial-gradient(ellipse 90px 40px at 90px 20px, #4a3342, transparent),
    radial-gradient(ellipse 80px 40px at 290px 22px, #55503f, transparent),
    radial-gradient(ellipse 80px 40px at 620px 20px, #5a4c58, transparent),
    radial-gradient(ellipse 60px 30px at 700px 24px, #4c3e50, transparent),
    radial-gradient(ellipse 90px 30px at 790px 20px, #33342f, transparent),
    linear-gradient(#35333a, #201f28);
`;

const StartButton = styled.button`
  display: flex;
  align-items: center;
  justify-content: center;
  width: 47px;
`;

const TaskButton = styled.button`
  display: flex;
  align-items: center;
  justify-content: center;
  width: 49px;
  border: 1px solid transparent;

  ${(p) => p.$open && css`
    border-color: #a5a2a2;
    border-radius: 2px;
    background: linear-gradient(135deg, #99929a, #5a5455 50%, #6e676b);
  `}

  ${(p) => p.$lit && css`
    border-left: 2px solid #3fe03f;
  `}

  ${(p) => p.$current && css`
    border-color: #ddd;
    background: linear-gradient(135deg, #d9dbdc, #999ea2 50%, #bdc1c4);
  `}
`;

const Tray = styled.div`
  display: flex;
  flex: 1;
  align-items: center;
  justify-content: flex-end;
  gap: 8px;
  color: #fff;
`;

const TrayText = styled.span`
  margin-right: 7px;
`;

const Clock = styled.span`
  display: flex;
  flex-direction: column;
  align-items: center;
  gap: 3px;
  margin-left: 8px;
  line-height: 11px;
`;

const DesktopButton = styled.button`
  align-self: stretch;
  width: 12px;
  margin-left: 4px;
  border: 1px solid #77757b;
  background: linear-gradient(135deg, #74747a, #26262c 60%);
`;
